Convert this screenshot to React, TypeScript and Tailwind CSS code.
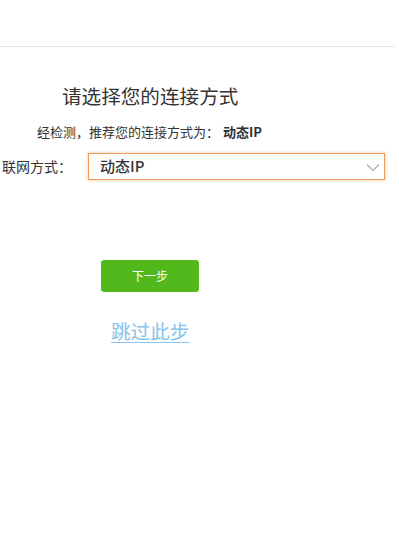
const App = () => {
  return (
    <div
      className="w-[399px] h-[547px] bg-white text-[#333] overflow-hidden"
      style={{ fontFamily: '"Noto Sans CJK SC", sans-serif' }}
    >
      {/* top bar */}
      <div className="h-[47px] w-[395px] border-b border-[#e5e5e5]" />

      <div className="flex flex-col">
        <h1 className="mt-[36px] ml-[62px] text-[19.6px] leading-[26px] font-normal text-[#333]">
          请选择您的连接方式
        </h1>
        <p className="mt-[14px] ml-[37px] text-[13px] leading-[18px] text-[#333]">
          经检测，推荐您的连接方式为：
          <span className="ml-[4px] font-bold">动态IP</span>
        </p>

        <div className="mt-[12px] flex items-center">
          <label className="w-[88px] pl-[2px] text-[14px] text-[#333]">联网方式：</label>
          <div className="relative w-[297px] h-[27px] border border-[#f39b55] shadow-[0_0_3px_rgba(243,155,85,0.6)] bg-white flex items-center">
            <span className="pl-[11px] text-[15px] font-medium text-[#333]">动态IP</span>
            <svg
              className="absolute right-[4px] top-[9px]"
              width="14"
              height="9"
              viewBox="0 0 14 9"
              fill="none"
              stroke="#aaa"
              strokeWidth="1.2"
            >
              <path d="M1 1.5 L7 7.5 L13 1.5" />
            </svg>
          </div>
        </div>

        <button className="mt-[80px] ml-[101px] w-[98px] h-[32px] rounded-[3px] bg-[#52b91c] text-white text-[12px]">
          下一步
        </button>

        <a className="mt-[26px] ml-[111px] w-fit text-[19.6px] leading-[26px] text-[#86c3ee] underline underline-offset-[3px]">
          跳过此步
        </a>
      </div>
    </div>
  );
};

export default App;
